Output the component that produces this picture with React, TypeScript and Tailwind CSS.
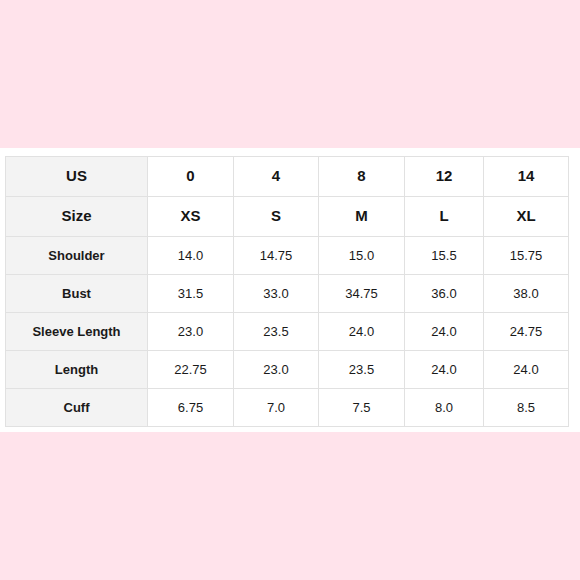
const cols = ["US", "0", "4", "8", "12", "14"];
const sizes = ["Size", "XS", "S", "M", "L", "XL"];
const rows: string[][] = [
  ["Shoulder", "14.0", "14.75", "15.0", "15.5", "15.75"],
  ["Bust", "31.5", "33.0", "34.75", "36.0", "38.0"],
  ["Sleeve Length", "23.0", "23.5", "24.0", "24.0", "24.75"],
  ["Length", "22.75", "23.0", "23.5", "24.0", "24.0"],
  ["Cuff", "6.75", "7.0", "7.5", "8.0", "8.5"],
];

function HeadRow({ cells }: { cells: string[] }) {
  return (
    <>
      {cells.map((c, i) => (
        <div
          key={i}
          className={`flex h-[39px] items-center justify-center text-[15px] font-bold text-[#151515] ${i === 0 ? "bg-[#f3f3f3]" : "bg-white"}`}
        >
          {c}
        </div>
      ))}
    </>
  );
}

export default function App() {
  return (
    <div
      className="flex h-[580px] w-[580px] flex-col bg-[#ffe3eb]"
      style={{ fontFamily: '"Liberation Sans", Arial, sans-serif' }}
    >
      <div className="h-[148px]" />
      <div className="h-[284px] bg-white pl-[5px] pt-2">
        {/* size chart */}
        <div className="grid w-fit grid-cols-[141px_85px_84px_85px_78px_84px] gap-px bg-[#e1e1e1] p-px">
          <HeadRow cells={cols} />
          <HeadRow cells={sizes} />
          {rows.map((r, ri) =>
            r.map((c, i) => (
              <div
                key={`${ri}-${i}`}
                className={`flex h-[37px] items-center justify-center text-[13px] text-[#1a1a1a] ${i === 0 ? "bg-[#f3f3f3] font-bold" : "bg-white"}`}
              >
                {c}
              </div>
            ))
          )}
        </div>
      </div>
    </div>
  );
}
